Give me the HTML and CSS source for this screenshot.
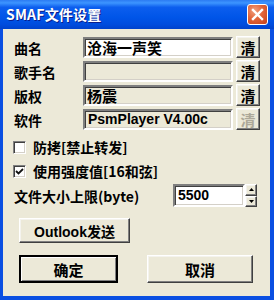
FILE: index.html
```html
<!DOCTYPE html>
<html>
<head>
<meta charset="utf-8">
<link rel="stylesheet" href="styles.css">
</head>
<body>
<div class="window">
  <div class="titlebar">
    <span class="title">SMAF文件设置</span>
    <div class="close">
      <svg width="13" height="13" viewBox="0 0 13 13"><path d="M2 2 L11 11 M11 2 L2 11" stroke="#fff" stroke-width="2.4" stroke-linecap="square"/></svg>
    </div>
  </div>
  <div class="client">
    <div class="fields">
      <span class="label">曲名</span>
      <div class="input white">沧海一声笑</div>
      <div class="btn small">清</div>
      <span class="label">歌手名</span>
      <div class="input"></div>
      <div class="btn small">清</div>
      <span class="label">版权</span>
      <div class="input">杨震</div>
      <div class="btn small">清</div>
      <span class="label">软件</span>
      <div class="input latin">PsmPlayer V4.00c</div>
      <div class="btn small disabled">清</div>
    </div>
    <div class="checks">
      <div class="check"><span class="box"></span><span class="label">防拷[禁止转发]</span></div>
      <div class="check"><span class="box"><svg width="9" height="9" viewBox="0 0 9 9"><path d="M1 4 L3.5 6.5 L8 2" stroke="#111" stroke-width="1.8" fill="none"/></svg></span><span class="label">使用强度值[16和弦]</span></div>
    </div>
    <div class="sizerow">
      <span class="label">文件大小上限(byte)</span>
      <div class="spin">
        <div class="input white latin spinval">5500</div>
        <div class="arrows">
          <div class="btn arrow"><svg width="5" height="3" viewBox="0 0 5 3"><path d="M0 3 L2.5 0 L5 3Z" fill="#000"/></svg></div>
          <div class="btn arrow"><svg width="5" height="3" viewBox="0 0 5 3"><path d="M0 0 L2.5 3 L5 0Z" fill="#000"/></svg></div>
        </div>
      </div>
    </div>
    <div class="btn outlook">Outlook发送</div>
    <div class="actions">
      <div class="btn big default">确定</div>
      <div class="btn big cancel">取消</div>
    </div>
  </div>
</div>
</body>
</html>
```
FILE: styles.css
```css
* { box-sizing: border-box; }
html, body { margin: 0; padding: 0; background: #fff; }
body { font-family: "Noto Sans CJK SC", "Liberation Sans", sans-serif; }

.window {
  width: 274px;
  height: 300px;
  background: #0A4FE2;
  display: flex;
  flex-direction: column;
  padding: 0 4px 4px 3px;
}

.titlebar {
  height: 29px;
  margin: 0 -4px 0 -3px;
  background: linear-gradient(#2C7BF2 0%, #3D95FF 10%, #0C5EEE 25%, #0055E8 60%, #004CDD 85%, #0042CC 100%);
  display: flex;
  align-items: center;
  padding: 0 6px 0 6px;
}
.title {
  color: #fff;
  font-weight: bold;
  font-size: 14px;
  letter-spacing: 0.2px;
  text-shadow: 1px 1px 0 #0A1E8C;
  flex: 1;
  margin-top: -1px;
}
.close {
  width: 21px;
  height: 21px;
  border: 1px solid #fff;
  border-radius: 3px;
  background: radial-gradient(circle at 35% 30%, #F0A080 0%, #E2653A 45%, #C5401A 100%);
  display: flex;
  align-items: center;
  justify-content: center;
}

.client {
  flex: 1;
  background: #ECE9D8;
  padding: 8px 0 0 11px;
  display: flex;
  flex-direction: column;
}

.label {
  font-size: 14px;
  font-weight: bold;
  color: #000;
  line-height: 16px;
  white-space: nowrap;
}

.fields {
  display: grid;
  grid-template-columns: 66px 150px 24px;
  grid-auto-rows: 21px;
  column-gap: 3px;
  row-gap: 3px;
  align-items: center;
}

.input {
  height: 21px;
  background: #ECE9D8;
  border: 2px solid;
  border-color: #7F7F7F #fff #fff #7F7F7F;
  box-shadow: inset 1px 1px 0 #404040, inset -1px -1px 0 #D4D0C8;
  font-size: 15px;
  font-weight: bold;
  line-height: 17px;
  padding: 0 0 0 2px;
  color: #000;
  white-space: nowrap;
  overflow: hidden;
}
.input.white { background: #fff; }
.input.latin { font-family: "Liberation Sans", sans-serif; font-size: 14px; padding-left: 3px; }

.btn {
  background: #ECE9D8;
  border: 1px solid;
  border-color: #fff #404040 #404040 #fff;
  box-shadow: inset -1px -1px 0 #808080, inset 1px 1px 0 #F4F3EE;
  display: flex;
  align-items: center;
  justify-content: center;
  font-weight: bold;
  color: #000;
}
.btn.small {
  height: 22px;
  font-size: 15px;
  margin-top: -1px;
}
.btn.disabled { color: #ACA899; }

.checks {
  display: flex;
  flex-direction: column;
  gap: 4px;
  margin-top: 7px;
  margin-left: -1px;
}
.check {
  display: flex;
  align-items: center;
  gap: 7px;
  height: 20px;
}
.box {
  width: 13px;
  height: 13px;
  background: #fff;
  border: 1px solid;
  border-color: #808080 #fff #fff #808080;
  box-shadow: inset 1px 1px 0 #404040, inset -1px -1px 0 #D4D0C8;
  display: flex;
  align-items: center;
  justify-content: center;
}

.sizerow {
  display: flex;
  align-items: center;
  margin-top: 3px;
  height: 23px;
}
.sizerow .label { width: 159px; }
.spin { display: flex; }
.spinval { width: 72px; height: 23px; line-height: 19px; }
.arrows { display: flex; flex-direction: column; }
.btn.arrow { width: 12px; height: 11.5px; }

.btn.outlook {
  width: 111px;
  height: 25px;
  margin-top: 11px;
  margin-left: 5px;
  font-family: "Liberation Sans", "Noto Sans CJK SC", sans-serif;
  font-size: 14px;
}

.actions {
  display: flex;
  margin-top: 12px;
  margin-left: 5px;
  gap: 29px;
}
.btn.big {
  height: 28px;
  font-size: 15px;
}
.btn.default {
  width: 99px;
  border: 2px solid #000;
  box-shadow: inset 1px 1px 0 #fff, inset -1px -1px 0 #808080;
}
.btn.cancel { width: 106px; }
```
